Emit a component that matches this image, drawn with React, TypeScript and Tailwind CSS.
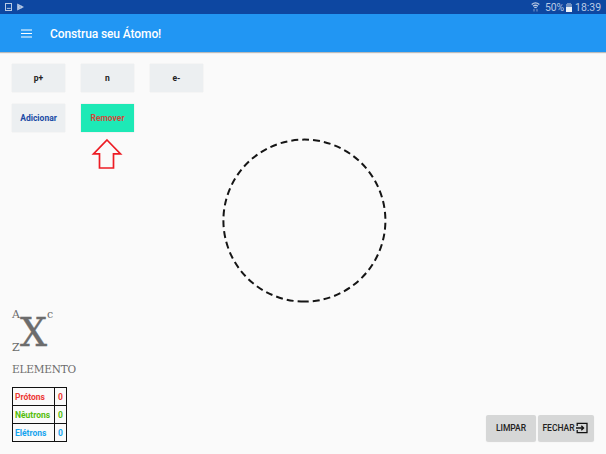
import React from "react";

const particles = ["p+", "n", "e-"];

const counts = [
  { label: "Prótons", color: "text-[#ed3833]" },
  { label: "Nêutrons", color: "text-[#55bd0b]" },
  { label: "Elétrons", color: "text-[#17a4ee]" },
];

function StatusBar() {
  return (
    <div className="flex h-[14px] items-center bg-[#0d47a1] pr-[5px] pl-[5px] text-[#b9cae4]">
      <svg width="7" height="8" viewBox="0 0 7 8" fill="none" stroke="currentColor">
        <rect x=".5" y=".5" width="6" height="7" />
        <path d="M1.5 6 3 4.5 4 5.5 5 4.5 6 6z" fill="currentColor" stroke="none" />
      </svg>
      <svg className="ml-[5px]" width="7" height="8" viewBox="0 0 7 8">
        <path d="M.2 .6 7 4 .2 7.4z" fill="currentColor" />
        <path d="M1 1.5 4.5 5.7M1 6.5 4.5 2.3" stroke="#7d9ccf" strokeWidth=".5" />
      </svg>
      <svg className="ml-auto" width="9" height="10" viewBox="0 0 9 10" fill="none" stroke="currentColor" strokeWidth="1.3">
        <path d="M.7 2.5Q4.5-.7 8.3 2.5M2.1 4.3Q4.5 2.2 6.9 4.3" />
        <path d="M3.3 5.8Q4.5 4.8 5.7 5.8" />
        <path d="M3 7v2.5M6 7v2.5" opacity=".5" />
      </svg>
      <span className="ml-[5px] w-[20px] pt-px text-[10.4px] leading-[14px] tracking-[-0.1px]">50%</span>
      <svg className="ml-[1px]" width="6" height="9" viewBox="0 0 6 9">
        <path d="M0 1h1V0h4v1h1v3H0z" fill="#6f8fc3" />
        <path d="M0 4h6v5H0z" fill="#edf3fa" />
      </svg>
      <span className="ml-[3px] w-[26px] pt-px text-[10.5px] leading-[14px]">18:39</span>
    </div>
  );
}

function AppBar() {
  return (
    <header className="flex h-[38px] items-center bg-[#2196f3] pl-[21px] text-white shadow-[0_1px_1px_rgba(0,0,0,0.25)]">
      <svg width="11" height="9" viewBox="0 0 11 9" stroke="#fff" strokeWidth="1.2">
        <path d="M0 1h11M0 4.5h11M0 8h11" />
      </svg>
      <h1 className="ml-[18px] pt-[2px] text-[12px] leading-4 font-medium tracking-[-0.1px] whitespace-nowrap">Construa seu Átomo!</h1>
    </header>
  );
}

export default function App() {
  return (
    <div className="flex h-[454px] w-[606px] flex-col overflow-hidden bg-[#fafafa] font-['Roboto',sans-serif] text-[#212121]">
      <StatusBar />
      <AppBar />
      <main className="relative flex flex-1 flex-col px-3 pt-3 pb-3">
        <div className="flex gap-4">
          {particles.map((p) => (
            <button key={p} className="h-7 w-[53px] bg-[#eceff1] text-[8.5px] font-bold shadow-[0_0_1px_rgba(0,0,0,0.12)]">
              {p}
            </button>
          ))}
        </div>
        <div className="mt-3 flex gap-4">
          <button className="h-7 w-[53px] bg-[#eceff1] text-[8.5px] font-bold text-[#194ba5] shadow-[0_0_1px_rgba(0,0,0,0.12)]">Adicionar</button>
          <button className="h-7 w-[53px] bg-[#1de9b6] text-[8.5px] font-bold text-[#d14a3c] shadow-[0_0_1px_rgba(0,0,0,0.2)]">Remover</button>
        </div>
        <svg className="mt-[6px] ml-[79px]" width="32" height="32" viewBox="0 0 32 32" fill="none">
          <path d="M16 2 29.5 15.8H22.5V30H8.5V15.8H2.5z" stroke="#ed1c24" strokeWidth="1.7" />
        </svg>

        <svg className="absolute top-[86px] left-[221px]" width="167" height="167" viewBox="0 0 167 167" fill="none">
          <circle cx="83.4" cy="82.6" r="81" stroke="#151515" strokeWidth="2" strokeDasharray="6.9 4.05" transform="rotate(90 83.4 82.6)" />
        </svg>

        <div className="mt-auto flex items-end justify-between">
          <section>
            <div className="flex h-[45px] font-['DejaVu_Serif',serif] text-[#6c6c6c]">
              <div className="flex w-[8px] flex-col justify-between text-[11px] leading-[12px]">
                <span>A</span>
                <span>Z</span>
              </div>
              <span className="w-[27px] origin-left scale-x-[0.95] text-[40px] leading-[46px] [-webkit-text-stroke:0.4px_#6c6c6c]">X</span>
              <span className="text-[11px] leading-[12px]">c</span>
            </div>
            <div className="mt-[7px] h-4 w-[71px] origin-left scale-x-[0.905] font-['DejaVu_Serif',serif] text-[11.6px] leading-4 tracking-[-0.2px] text-[#6c6c6c]">ELEMENTO</div>
            <table className="mt-[10px] h-[55px] w-[54px] table-fixed border-collapse text-[8.5px] leading-[10px] font-bold">
              <colgroup>
                <col className="w-[42px]" />
                <col className="w-[12px]" />
              </colgroup>
              <tbody>
                {counts.map((c) => (
                  <tr key={c.label} className={c.color}>
                    <td className="border border-[#111] p-0 pl-[2px]">{c.label}</td>
                    <td className="border border-[#111] p-0 text-center">0</td>
                  </tr>
                ))}
              </tbody>
            </table>
          </section>
          <div className="flex gap-[2px]">
            <button className="mb-px h-[26px] w-[50px] rounded-[2px] bg-[#d6d7d7] text-[8.5px] font-medium shadow-[0_1px_1px_rgba(0,0,0,0.15)]">LIMPAR</button>
            <button className="mb-px flex h-[26px] w-[56px] items-center justify-center gap-[1px] rounded-[2px] bg-[#d6d7d7] pr-[2px] text-[8.5px] font-medium shadow-[0_1px_1px_rgba(0,0,0,0.15)]">
              FECHAR
              <svg width="12" height="12" viewBox="0 0 12 12" fill="none" stroke="#111" strokeWidth="1.3">
                <path d="M1.2 4V1.3h9.8v9.4H1.2V8M0 6h7.5M5.3 3.7 7.6 6 5.3 8.3" />
              </svg>
            </button>
          </div>
        </div>
      </main>
    </div>
  );
}
